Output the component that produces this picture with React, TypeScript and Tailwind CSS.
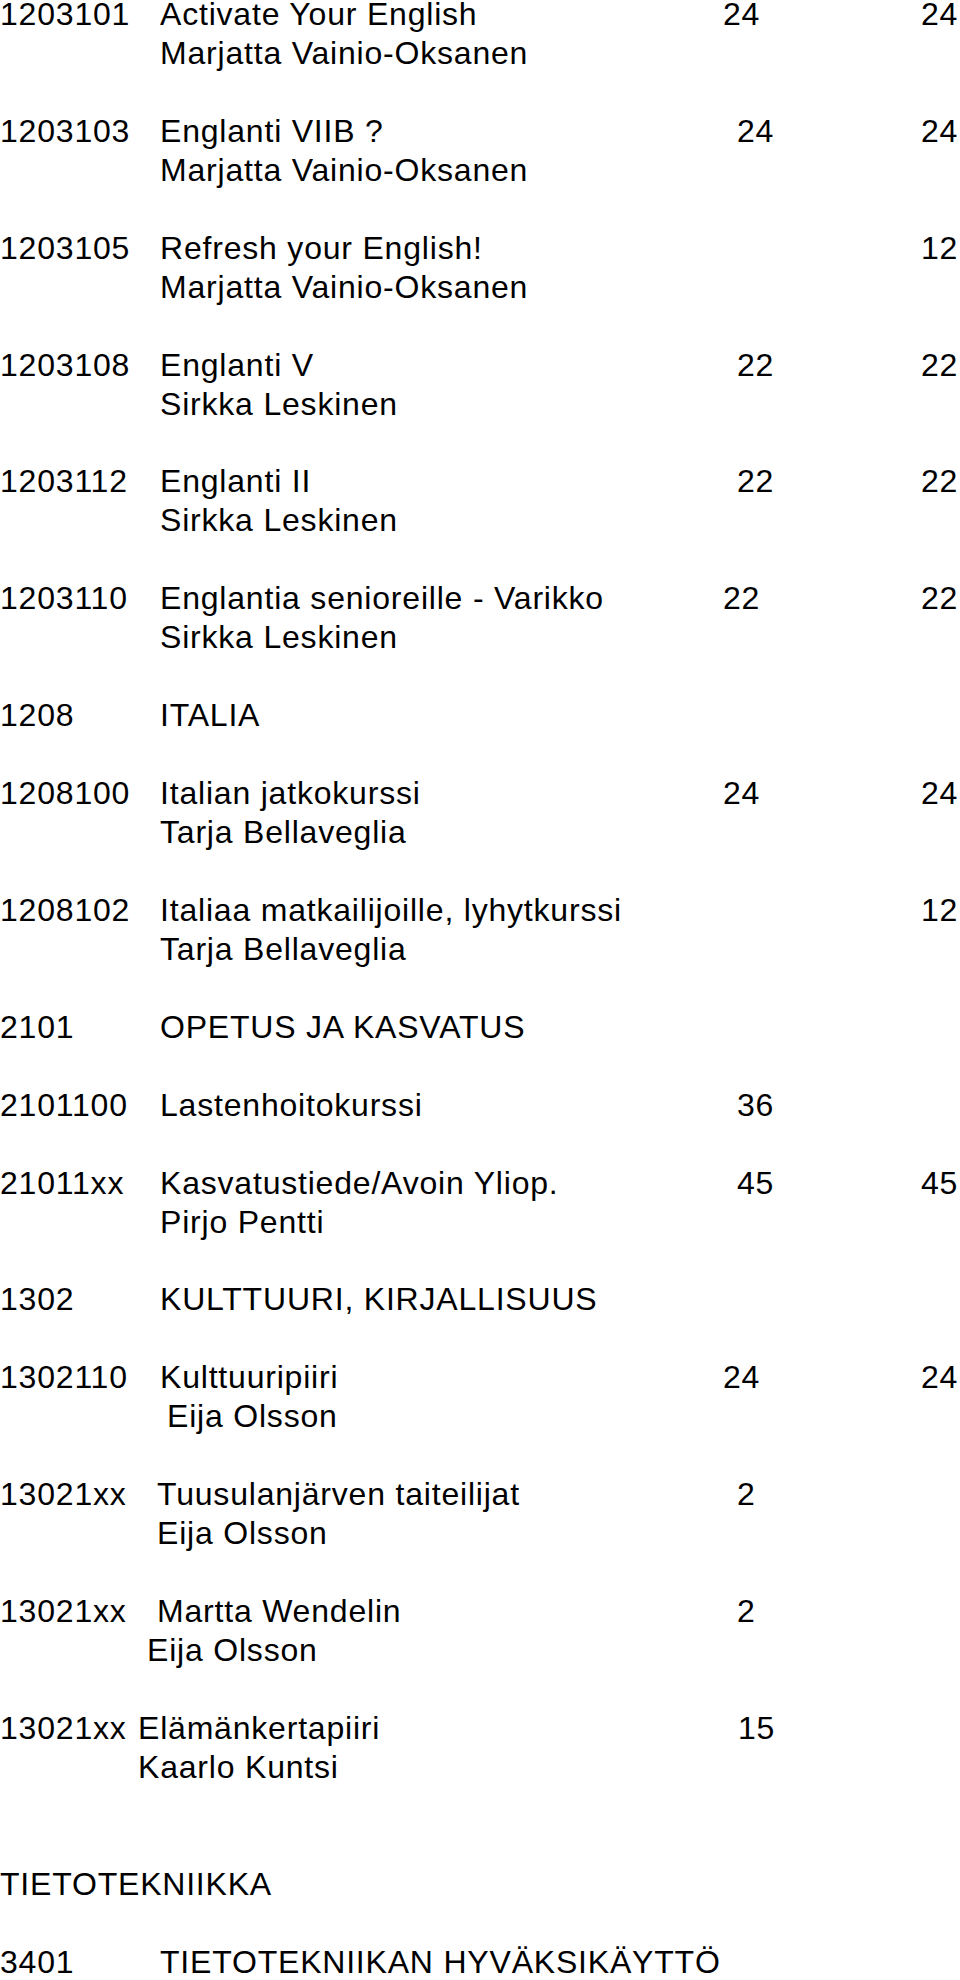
import React from "react";

type Entry = {
  code: string;
  codeW: string;
  title: string;
  n1?: string;
  n1Pad?: string;
  n2?: string;
  name?: string;
  namePad?: string;
  extraTop?: boolean;
};

const entries: Entry[] = [
  { code: "1203101", codeW: "w-[160px]", title: "Activate Your English", n1: "24", n1Pad: "pl-0", n2: "24", name: "Marjatta Vainio-Oksanen", namePad: "pl-[160px]" },
  { code: "1203103", codeW: "w-[160px]", title: "Englanti VIIB ?", n1: "24", n1Pad: "pl-[14px]", n2: "24", name: "Marjatta Vainio-Oksanen", namePad: "pl-[160px]" },
  { code: "1203105", codeW: "w-[160px]", title: "Refresh your English!", n2: "12", name: "Marjatta Vainio-Oksanen", namePad: "pl-[160px]" },
  { code: "1203108", codeW: "w-[160px]", title: "Englanti V", n1: "22", n1Pad: "pl-[14px]", n2: "22", name: "Sirkka Leskinen", namePad: "pl-[160px]" },
  { code: "1203112", codeW: "w-[160px]", title: "Englanti II", n1: "22", n1Pad: "pl-[14px]", n2: "22", name: "Sirkka Leskinen", namePad: "pl-[160px]" },
  { code: "1203110", codeW: "w-[160px]", title: "Englantia senioreille - Varikko", n1: "22", n1Pad: "pl-0", n2: "22", name: "Sirkka Leskinen", namePad: "pl-[160px]" },
  { code: "1208", codeW: "w-[160px]", title: "ITALIA" },
  { code: "1208100", codeW: "w-[160px]", title: "Italian jatkokurssi", n1: "24", n1Pad: "pl-0", n2: "24", name: "Tarja Bellaveglia", namePad: "pl-[160px]" },
  { code: "1208102", codeW: "w-[160px]", title: "Italiaa matkailijoille, lyhytkurssi", n2: "12", name: "Tarja Bellaveglia", namePad: "pl-[160px]" },
  { code: "2101", codeW: "w-[160px]", title: "OPETUS JA KASVATUS" },
  { code: "2101100", codeW: "w-[160px]", title: "Lastenhoitokurssi", n1: "36", n1Pad: "pl-[14px]" },
  { code: "21011xx", codeW: "w-[160px]", title: "Kasvatustiede/Avoin Yliop.", n1: "45", n1Pad: "pl-[14px]", n2: "45", name: "Pirjo Pentti", namePad: "pl-[160px]" },
  { code: "1302", codeW: "w-[160px]", title: "KULTTUURI, KIRJALLISUUS" },
  { code: "1302110", codeW: "w-[160px]", title: "Kulttuuripiiri", n1: "24", n1Pad: "pl-0", n2: "24", name: "Eija Olsson", namePad: "pl-[167px]" },
  { code: "13021xx", codeW: "w-[157px]", title: "Tuusulanjärven taiteilijat", n1: "2", n1Pad: "pl-[14px]", name: "Eija Olsson", namePad: "pl-[157px]" },
  { code: "13021xx", codeW: "w-[157px]", title: "Martta Wendelin", n1: "2", n1Pad: "pl-[14px]", name: "Eija Olsson", namePad: "pl-[147px]" },
  { code: "13021xx", codeW: "w-[138px]", title: "Elämänkertapiiri", n1: "15", n1Pad: "pl-[15px]", name: "Kaarlo Kuntsi", namePad: "pl-[138px]" },
  { code: "", codeW: "w-0", title: "TIETOTEKNIIKKA", extraTop: true },
  { code: "3401", codeW: "w-[160px]", title: "TIETOTEKNIIKAN HYVÄKSIKÄYTTÖ" },
];

function Row({ e }: { e: Entry }) {
  return (
    <div className={e.extraTop ? "mt-[38.96px] flex flex-col" : "flex flex-col"}>
      <div className="flex whitespace-pre">
        <span className={`shrink-0 ${e.codeW}`}>{e.code}</span>
        <span className="min-w-0 flex-1">{e.title}</span>
        <span className={`w-[198px] shrink-0 ${e.n1Pad ?? ""}`}>{e.n1 ?? ""}</span>
        <span className="w-[39px] shrink-0">{e.n2 ?? ""}</span>
      </div>
      {e.name && <div className={`whitespace-pre ${e.namePad}`}>{e.name}</div>}
    </div>
  );
}

export default function App() {
  return (
    <div className="min-h-[1980px] w-[960px] overflow-hidden bg-white text-black">
      <div className="-mt-[5px] flex flex-col gap-y-[38.96px] font-['Liberation_Sans',Arial,sans-serif] text-[32px] leading-[38.96px] tracking-[0.8px]">
        {entries.map((e, i) => (
          <Row key={i} e={e} />
        ))}
      </div>
    </div>
  );
}
